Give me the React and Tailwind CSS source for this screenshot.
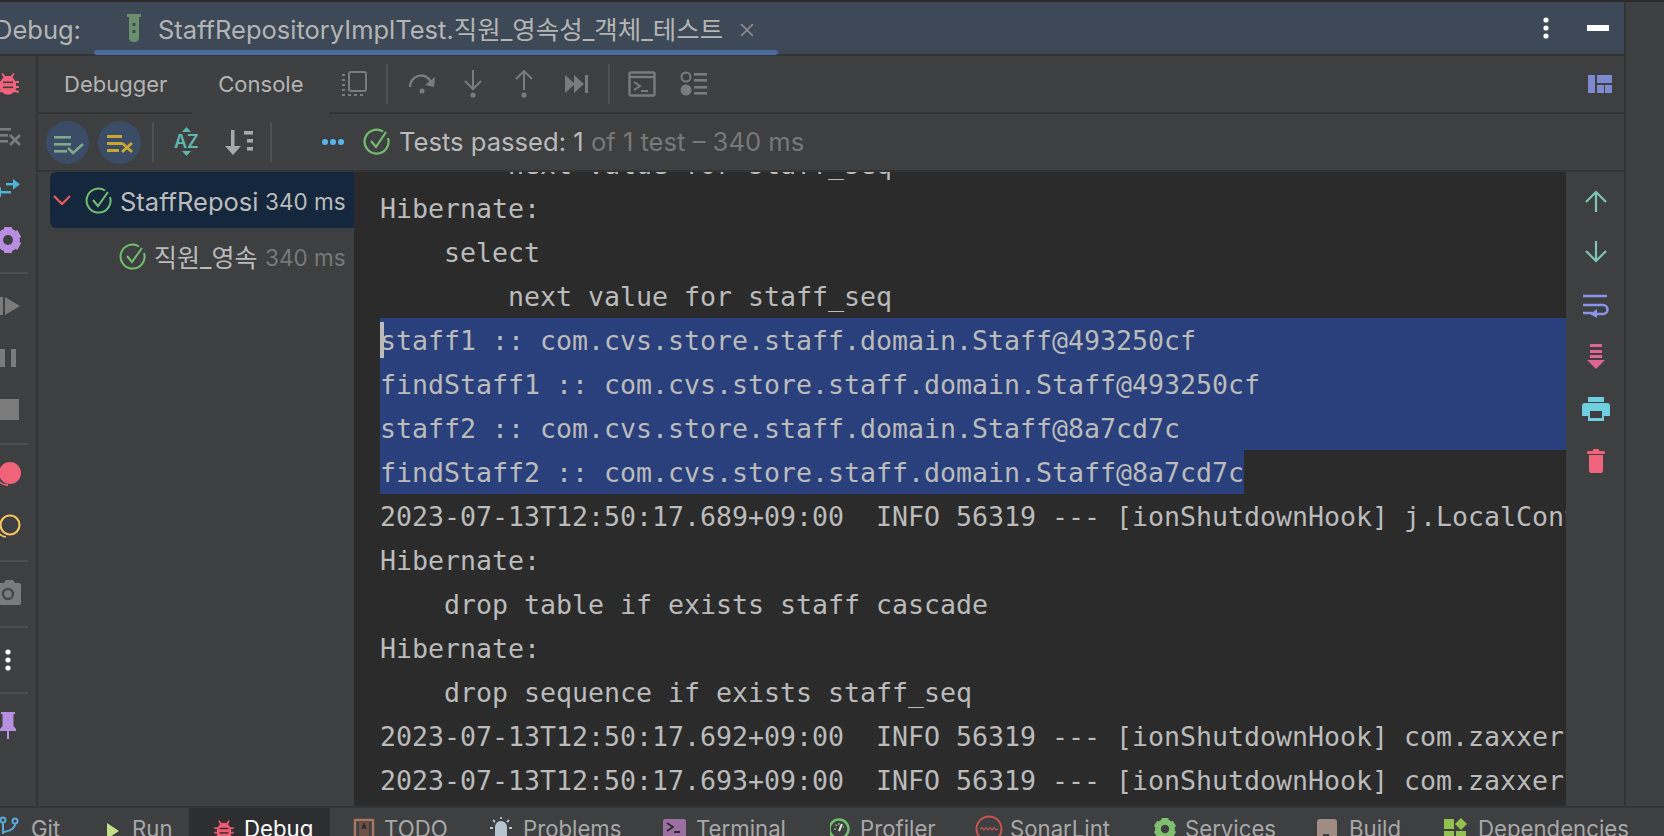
import React from 'react'

const Sep = () => <div className="w-[2px] h-[40px] bg-[#505153] shrink-0" />
const StripeDivider = () => <div className="h-[2px] w-[28px] bg-[#4e4f51]" />

const BugShape = ({ x, y, s = 1, fill = '#f0637a', bg = '#3e3f41' }) => (
  <g transform={`translate(${x} ${y}) scale(${s})`} fill={fill} stroke="none">
    <path d="M-5 -11 L-3 -8 L3 -8 L5 -11 L6.5 -10 L4.5 -6.5 A8 8 0 0 1 7 -3 L11 -3 L11 -1 L8 -1 L8 2 L11 2 L11 4 L8 4 A8 8 0 0 1 7.5 6 L11 7 L10.5 9 L6 8 A8 8 0 0 1 -6 8 L-10.5 9 L-11 7 L-7.5 6 A8 8 0 0 1 -8 4 L-11 4 L-11 2 L-8 2 L-8 -1 L-11 -1 L-11 -3 L-7 -3 A8 8 0 0 1 -4.5 -6.5 L-6.5 -10 Z" />
    <rect x="-5" y="-2.5" width="10" height="1.6" fill={bg} />
    <rect x="-5" y="2.5" width="10" height="1.6" fill={bg} />
  </g>
)

const Gear = ({ cx, cy, r, fill }) => (
  <g>
    <circle cx={cx} cy={cy} r={r * 0.66} fill="none" stroke={fill} strokeWidth={r * 0.5} />
    {[0, 60, 120].map((a) => (
      <rect
        key={a}
        x={cx - r * 0.3}
        y={cy - r}
        width={r * 0.6}
        height={r * 2}
        fill={fill}
        transform={`rotate(${a} ${cx} ${cy})`}
      />
    ))}
    <circle cx={cx} cy={cy} r={r * 0.38} fill="#3e3f41" />
  </g>
)

const Slot = ({ h, children }) => (
  <svg width="36" height={h} className="block shrink-0">
    {children}
  </svg>
)

const LeftStripe = () => (
  <div className="w-[36px] shrink-0 flex flex-col overflow-hidden">
    <Slot h={56}><BugShape x={8} y={28} /></Slot>
    <Slot h={52}>
      <g fill="#7b7b7b">
        <rect x="0" y="16" width="11" height="2.6" />
        <rect x="0" y="22" width="8" height="2.6" />
        <rect x="0" y="28" width="8" height="2.6" />
      </g>
      <path d="M10 23 L20 33 M20 23 L10 33" stroke="#7b7b7b" strokeWidth="2.8" />
    </Slot>
    <Slot h={48}>
      <g fill="#4cb6d8">
        <rect x="6" y="19" width="10" height="2.4" />
        <path d="M13 15 L20 20.2 L13 25.4 Z" />
        <rect x="0" y="27" width="11" height="2.4" />
        <path d="M1 23 L-5 28.2 L1 33.4 Z" />
      </g>
    </Slot>
    <Slot h={60}><Gear cx={8} cy={28} r={13} fill="#b88fe0" /></Slot>
    <StripeDivider />
    <Slot h={58}>
      <g fill="#7b7b7b">
        <rect x="0" y="23" width="3" height="18" />
        <path d="M5 23 L20 32 L5 41 Z" />
      </g>
    </Slot>
    <Slot h={52}>
      <g fill="#7b7b7b">
        <rect x="0" y="17" width="5" height="18" />
        <rect x="11" y="17" width="5" height="18" />
      </g>
    </Slot>
    <Slot h={59}><rect x="0" y="15" width="19" height="21" fill="#7b7b7b" /></Slot>
    <StripeDivider />
    <Slot h={54}>
      <path d="M-2 34 A11 11 0 0 0 8 39 L8 41 A12 12 0 0 1 -2 36 Z" fill="#f0637a" />
      <circle cx="10" cy="28" r="11" fill="#f0637a" />
    </Slot>
    <Slot h={61}>
      <path d="M-2 33 A11 11 0 0 0 6 38" stroke="#f5c261" strokeWidth="1.6" fill="none" />
      <circle cx="10" cy="26" r="9.5" fill="none" stroke="#f5c261" strokeWidth="2.2" />
    </Slot>
    <StripeDivider />
    <Slot h={64}>
      <path d="M-3 21 L4 21 L6 18 L13 18 L15 21 L19 21 Q21 21 21 23 L21 41 Q21 43 19 43 L-3 43 Z" fill="#7b7b7b" />
      <circle cx="8" cy="32" r="5" fill="none" stroke="#46474a" strokeWidth="2.4" />
    </Slot>
    <StripeDivider />
    <Slot h={64}>
      <g fill="#ffffff">
        <circle cx="8" cy="24" r="2.6" />
        <circle cx="8" cy="32" r="2.6" />
        <circle cx="8" cy="40" r="2.6" />
      </g>
    </Slot>
    <StripeDivider />
    <Slot h={56}>
      <path d="M1 18 L15 18 L15 20 L13.5 20 L13.5 32 L16 35 L16 37 L9 37 L9 45 L7 45 L7 37 L0 37 L0 35 L2.5 32 L2.5 20 L1 20 Z" fill="#b88fe0" />
    </Slot>
  </div>
)

const ToolbarTop = () => (
  <div className="h-[56px] flex items-center relative text-[#b4b4b4]">
    <span className="ml-[26px] text-[22px] leading-none">Debugger</span>
    <span className="ml-[51px] text-[22px] leading-none">Console</span>
    <svg width="26" height="26" className="ml-[37px] shrink-0" fill="none" stroke="#7b7b7b" strokeWidth="2">
      <rect x="8" y="1" width="17" height="19" rx="2" />
      <path d="M1 4 h4 M1 9 h4 M1 14 h4 M1 19 h4 M1 24 h3 M7 24 h3 M13 24 h3 M19 24 h3" strokeDasharray="3 2" />
    </svg>
    <div className="ml-[19px]"><Sep /></div>
    <svg width="30" height="24" className="ml-[20px] shrink-0" fill="none" stroke="#7b7b7b" strokeWidth="2.4">
      <path d="M2 15 A11 11 0 0 1 23 10" />
      <path d="M27 5 L26 15 L17 13 Z" fill="#7b7b7b" stroke="none" />
      <circle cx="14" cy="19" r="2.5" fill="#7b7b7b" stroke="none" />
    </svg>
    <svg width="20" height="28" className="ml-[25px] shrink-0" fill="none" stroke="#7b7b7b" strokeWidth="2">
      <path d="M10 0 V19 M2 11 L10 19 L18 11" />
      <circle cx="10" cy="25" r="2.6" fill="#7b7b7b" stroke="none" />
    </svg>
    <svg width="20" height="28" className="ml-[31px] shrink-0" fill="none" stroke="#7b7b7b" strokeWidth="2">
      <path d="M10 20 V1 M2 9 L10 1 L18 9" />
      <circle cx="10" cy="25" r="2.6" fill="#7b7b7b" stroke="none" />
    </svg>
    <svg width="24" height="20" className="ml-[31px] shrink-0" fill="#7b7b7b">
      <path d="M0 1 L10 10 L0 19 Z M9 1 L19 10 L9 19 Z" />
      <rect x="20" y="1" width="3" height="18" />
    </svg>
    <div className="ml-[19px]"><Sep /></div>
    <svg width="28" height="26" className="ml-[18px] shrink-0" fill="none" stroke="#7b7b7b" strokeWidth="2.4">
      <rect x="1.5" y="1.5" width="25" height="23" rx="1.5" />
      <path d="M1 6 H27" />
      <path d="M6 11 L12 15 L6 19 M13 20 H20" strokeWidth="2" />
    </svg>
    <svg width="28" height="26" className="ml-[24px] shrink-0" fill="#7b7b7b">
      <circle cx="6" cy="6" r="4.5" fill="none" stroke="#7b7b7b" strokeWidth="2" />
      <circle cx="6" cy="19" r="5.5" />
      <rect x="14" y="2" width="13" height="2.6" />
      <rect x="14" y="8" width="13" height="2.6" />
      <rect x="14" y="15" width="13" height="2.6" />
      <rect x="14" y="21" width="13" height="2.6" />
    </svg>
    <svg width="24" height="18" className="ml-auto mr-[12px] shrink-0" fill="#7d89d0">
      <rect x="0" y="0" width="7" height="18" />
      <rect x="9" y="0" width="15" height="8" />
      <rect x="9" y="10" width="7" height="8" />
      <rect x="17" y="10" width="7" height="8" />
    </svg>
  </div>
)

const ToolbarBottom = () => (
  <div className="h-[56px] flex items-center">
    <svg width="43" height="43" className="ml-[8px] shrink-0">
      <circle cx="21.5" cy="21.5" r="21.5" fill="#3b4d66" />
      <g fill="#7ea98a">
        <rect x="8" y="15" width="17" height="2.6" />
        <rect x="8" y="22" width="17" height="2.6" />
        <rect x="8" y="29" width="13" height="2.6" />
      </g>
      <path d="M22 27 L27 32 L37 23" fill="none" stroke="#7ea98a" strokeWidth="2.6" />
    </svg>
    <svg width="43" height="43" className="ml-[9px] shrink-0">
      <circle cx="21.5" cy="21.5" r="21.5" fill="#3b4d66" />
      <g fill="#c9a632">
        <rect x="9" y="14" width="15" height="3" />
        <rect x="9" y="21" width="15" height="3" />
        <rect x="9" y="28" width="12" height="3" />
      </g>
      <path d="M24 22 L34 31 M34 22 L24 31" fill="none" stroke="#c9a632" strokeWidth="3" />
    </svg>
    <div className="ml-[11px]"><Sep /></div>
    <svg width="26" height="32" className="ml-[20px] shrink-0">
      <path d="M12.5 1 L17 6 L8 6 Z M12.5 30 L17 25 L8 25 Z" fill="#5fb7ad" />
      <text x="0" y="22" fontSize="18" fontWeight="600" fill="#5fb7ad" className="[font-family:Inter,sans-serif]">AZ</text>
    </svg>
    <svg width="28" height="25" className="ml-[25px] shrink-0" fill="#a8a8a8">
      <path d="M6 0 H9.5 V16 H16 L8 25 L0 16 H6 Z" />
      <rect x="19" y="1" width="9" height="3.6" />
      <rect x="22" y="9" width="6" height="3.6" />
      <rect x="22" y="17" width="6" height="3.6" />
    </svg>
    <div className="ml-[17px]"><Sep /></div>
    <svg width="24" height="8" className="ml-[49px] shrink-0" fill="#58b6ec">
      <circle cx="4" cy="4" r="3" />
      <circle cx="12" cy="4" r="3" />
      <circle cx="20" cy="4" r="3" />
    </svg>
    <svg width="28" height="28" className="ml-[18px] shrink-0" fill="none" stroke="#73bd6f" strokeWidth="2.2">
      <path d="M25 10 A12 12 0 1 1 20 3.5" />
      <path d="M8 13 L13 19 L23 4" />
    </svg>
    <span className="ml-[8px] text-[25.6px] leading-none whitespace-nowrap text-[#bbbbbb]">
      Tests passed: 1 <span className="text-[#787878]">of 1 test – 340 ms</span>
    </span>
  </div>
)

const CheckIcon = () => (
  <svg width="27" height="27" className="shrink-0" fill="none" stroke="#73bd6f" strokeWidth="2">
    <path d="M25 10 A12 12 0 1 1 20 3.5" />
    <path d="M8 13 L13 19 L23 5" />
  </svg>
)

const TestTree = () => (
  <div className="w-[316px] shrink-0 leading-none overflow-hidden">
    <div className="ml-[12px] h-[56px] rounded-l-[6px] bg-[#15273d] flex items-center relative whitespace-nowrap">
      <svg width="18" height="10" className="ml-[3px] shrink-0" fill="none" stroke="#e05a5a" strokeWidth="2.4">
        <path d="M1 1 L9 9 L17 1" />
      </svg>
      <div className="ml-[14px]"><CheckIcon /></div>
      <span className="ml-[8px] w-[138px] pt-[4px] overflow-hidden text-[#bbbbbb] text-[25.5px]">StaffReposi</span>
      <span className="ml-[7px] pt-[4px] text-[#bbbbbb] text-[22.5px]">340 ms</span>
    </div>
    <div className="h-[56px] flex items-center pl-[81px] whitespace-nowrap">
      <CheckIcon />
      <span className="ml-[8px] w-[104px] pt-[4px] overflow-hidden text-[#bbbbbb] text-[25px]">직원_영속</span>
      <span className="ml-[7px] pt-[4px] text-[#787878] text-[22.5px]">340 ms</span>
    </div>
  </div>
)

const lines = [
  { text: '        next value for staff_seq' },
  { text: 'Hibernate:' },
  { text: '    select' },
  { text: '        next value for staff_seq' },
  { text: 'staff1 :: com.cvs.store.staff.domain.Staff@493250cf', selected: true, cursor: true },
  { text: 'findStaff1 :: com.cvs.store.staff.domain.Staff@493250cf', selected: true },
  { text: 'staff2 :: com.cvs.store.staff.domain.Staff@8a7cd7c', selected: true },
  { text: 'findStaff2 :: com.cvs.store.staff.domain.Staff@8a7cd7c', selected: true, fit: true },
  { text: '2023-07-13T12:50:17.689+09:00  INFO 56319 --- [ionShutdownHook] j.LocalContainerEntityManagerFactoryBean' },
  { text: 'Hibernate:' },
  { text: '    drop table if exists staff cascade' },
  { text: 'Hibernate:' },
  { text: '    drop sequence if exists staff_seq' },
  { text: '2023-07-13T12:50:17.692+09:00  INFO 56319 --- [ionShutdownHook] com.zaxxer.hikari.HikariDataSource' },
  { text: '2023-07-13T12:50:17.693+09:00  INFO 56319 --- [ionShutdownHook] com.zaxxer.hikari.HikariDataSource' },
]

const ConsoleOutput = () => (
  <div className="w-[1212px] shrink-0 bg-[#2b2b2b] overflow-hidden pl-[26px] text-[#bbbbbb] text-[26.58px] leading-[44px] whitespace-pre [font-family:'DejaVu_Sans_Mono',monospace]">
    <div className="-mt-[30px]">
      {lines.map((line, i) => (
        <div
          key={i}
          className={`h-[44px] pt-[1px] relative ${line.selected ? 'bg-[#29407c]' : ''} ${line.fit ? 'w-fit' : ''}`}
        >
          {line.cursor && <div className="absolute left-0 top-[4px] w-[4px] h-[36px] bg-[#bbbbbb]" />}
          {line.text}
        </div>
      ))}
    </div>
  </div>
)

const RightToolbar = () => (
  <div className="flex-1 flex flex-col items-center ml-[2px]">
    <svg width="22" height="22" className="mt-[18px] shrink-0" fill="none" stroke="#7fc4b8" strokeWidth="2.2">
      <path d="M11 22 V2 M1 12 L11 2 L21 12" />
    </svg>
    <svg width="22" height="22" className="mt-[29px] shrink-0" fill="none" stroke="#7fc4b8" strokeWidth="2.2">
      <path d="M11 0 V20 M1 10 L11 20 L21 10" />
    </svg>
    <svg width="26" height="24" className="mt-[31px] shrink-0" fill="none" stroke="#8a94e8" strokeWidth="2.6">
      <path d="M0 2 H24 M0 11 H20 A4.5 4.5 0 0 1 20 20 H14 M0 19 H9" />
      <path d="M14 15 L14 24 L7 20 Z" fill="#8a94e8" stroke="none" />
    </svg>
    <svg width="20" height="26" className="mt-[26px] shrink-0" fill="#e0648f">
      <rect x="4" y="0" width="12" height="3" />
      <rect x="4" y="6" width="12" height="3" />
      <rect x="4" y="11" width="12" height="3" />
      <path d="M1 16 H19 L10 25 Z" />
    </svg>
    <svg width="28" height="24" className="mt-[27px] shrink-0" fill="#6fcfe0">
      <rect x="6" y="0" width="16" height="5" />
      <path d="M3 6 H25 Q28 6 28 9 V19 H22 V24 H6 V19 H0 V9 Q0 6 3 6 Z" />
      <rect x="8" y="14" width="12" height="7" fill="#3e3f41" />
    </svg>
    <svg width="18" height="24" className="mt-[28px] shrink-0" fill="#f0637a">
      <rect x="0" y="2" width="18" height="3" rx="1" />
      <rect x="6" y="0" width="6" height="3" rx="1" />
      <path d="M2 6 H16 V22 Q16 24 14 24 H4 Q2 24 2 22 Z" />
    </svg>
  </div>
)

const tabs = [
  {
    label: 'Git',
    offset: 31,
    cls: 'w-[106px]',
    icon: (
      <g fill="none" stroke="#58a8d8" strokeWidth="2">
        <circle cx="3" cy="12" r="2.5" />
        <circle cx="15" cy="13" r="2.5" />
        <path d="M3 15 V26 M15 16 Q15 22 4 24" />
      </g>
    ),
  },
  { label: 'Run', offset: 26, cls: 'w-[83px]', icon: <path d="M1 15 L13 23 L1 31 Z" fill="#c2e08a" /> },
  {
    label: 'Debug',
    offset: 30,
    cls: 'w-[141px] pl-[25px] bg-[#2d2e30] text-white',
    icon: <BugShape x={10} y={22} s={0.88} fill="#ee5a70" bg="#2d2e30" />,
  },
  {
    label: 'TODO',
    offset: 31,
    cls: 'w-[160px] pl-[23px]',
    icon: (
      <g>
        <rect x="2" y="12" width="18" height="24" fill="none" stroke="#a8755f" strokeWidth="2.5" />
        <path d="M6 14 H16 V32 H6 Z" fill="#6b5048" />
        <path d="M11 15 L13 21 L9 18 H13 L9 21 Z" fill="#2b2b2b" stroke="#2b2b2b" strokeWidth="0.8" />
      </g>
    ),
  },
  {
    label: 'Problems',
    offset: 33,
    cls: 'w-[173px]',
    icon: (
      <g>
        <path d="M5 30 V19 A6 6 0 0 1 17 19 V30 Z" fill="#b3c4d0" />
        <path d="M11 9 V11 M3 12 L5 14 M19 12 L17 14 M0 20 H3 M19 20 H22" stroke="#b3c4d0" strokeWidth="1.8" />
      </g>
    ),
  },
  {
    label: 'Terminal',
    offset: 33,
    cls: 'w-[167px]',
    icon: (
      <g>
        <rect x="0" y="11" width="23" height="25" rx="2" fill="#9b6fa0" />
        <path d="M4 15 L10 19 L4 23 M11 24 H17" fill="none" stroke="#2b2b2b" strokeWidth="1.8" />
      </g>
    ),
  },
  {
    label: 'Profiler',
    offset: 30,
    cls: 'w-[145px]',
    icon: (
      <g fill="none" stroke="#73bd6f">
        <circle cx="9" cy="21" r="9.5" strokeWidth="2.5" />
        <path d="M9 23 L12 16" strokeWidth="2" stroke="#d5e6d2" />
        <path d="M4 21 h2 M5.5 16.5 l1.5 1.5 M9 15 v2 M13 19 h1" strokeWidth="1.5" />
      </g>
    ),
  },
  {
    label: 'SonarLint',
    offset: 35,
    cls: 'w-[178px]',
    icon: (
      <g fill="none" stroke="#c4554f" strokeWidth="2">
        <circle cx="14" cy="21" r="12.5" />
        <path d="M5 21 L7 19.5 L9 22 L11 19.5 L13 22 L15 19.5 L17 22 L19 19.5 L21 22 L23 21" strokeWidth="1.2" />
      </g>
    ),
  },
  { label: 'Services', offset: 32, cls: 'w-[164px]', icon: <Gear cx={12} cy={21} r={11} fill="#7fbf6e" /> },
  {
    label: 'Build',
    offset: 32,
    cls: 'w-[127px]',
    icon: (
      <g>
        <path d="M3 11 H17 Q20 11 20 14 V36 H0 V14 Q0 11 3 11 Z" fill="#a08c82" />
        <rect x="6" y="26" width="6" height="4" fill="#3e3f41" />
      </g>
    ),
  },
  {
    label: 'Dependencies',
    offset: 34,
    cls: 'w-[180px]',
    icon: (
      <g fill="#93c04e">
        <rect x="0" y="11" width="10" height="10" />
        <path d="M17 10 L23 16 L17 22 L11 16 Z" />
        <rect x="0" y="23" width="10" height="10" />
        <rect x="12" y="23" width="10" height="10" />
      </g>
    ),
  },
]

const ToolWindowBar = () => (
  <div className="h-[28px] flex overflow-hidden text-[22.2px] text-[#a8a8a8] whitespace-nowrap bg-[#3e3f41]">
    {tabs.map((tab) => (
      <div key={tab.label} className={`h-[28px] flex shrink-0 ${tab.cls}`}>
        <svg width={tab.offset} height="28" className="shrink-0 overflow-hidden">
          {tab.icon}
        </svg>
        <span className="leading-[28px] pt-[7px]">{tab.label}</span>
      </div>
    ))}
  </div>
)

const App = () => {
  return (
    <div className="w-[1664px] h-[836px] overflow-hidden flex flex-col bg-[#3e3f41] [font-family:Inter,'Noto_Sans_CJK_KR',sans-serif]">
      <div className="h-[2px] bg-[#2b2b2b] shrink-0" />
      <div className="h-[804px] flex shrink-0">
        <div className="w-[1624px] shrink-0 flex flex-col">
          <div className="h-[52px] shrink-0 bg-[#3d4956] flex items-center relative whitespace-nowrap">
            <span className="-ml-[6px] w-[133px] pt-[3px] shrink-0 text-[25.5px] leading-none text-[#b4b4b4]">Debug:</span>
            <svg width="14" height="28" className="shrink-0" fill="#6a8f6e">
              <rect x="0" y="0" width="14" height="3" />
              <path d="M2 3 H12 V24 Q12 28 7 28 Q2 28 2 24 Z" />
              <rect x="5.5" y="9" width="3" height="3" fill="#3d4956" />
              <rect x="5.5" y="16" width="3" height="3" fill="#3d4956" />
            </svg>
            <span className="ml-[17px] pt-[3px] text-[25.5px] leading-none text-[#b4b4b4]">StaffRepositoryImplTest.직원_영속성_객체_테스트</span>
            <svg width="14" height="12" className="ml-[17px] mt-[4px] shrink-0" fill="none" stroke="#8f8f8f" strokeWidth="1.6">
              <path d="M1 0 L13 12 M13 0 L1 12" />
            </svg>
            <div className="absolute left-[94px] bottom-[-1px] w-[684px] h-[5px] rounded-full bg-[#4a6a9b]" />
            <svg width="6" height="22" className="ml-auto mr-[75px] shrink-0" fill="#ffffff">
              <circle cx="3" cy="3" r="2.6" />
              <circle cx="3" cy="11" r="2.6" />
              <circle cx="3" cy="19" r="2.6" />
            </svg>
            <div className="absolute left-[1587px] top-[23px] w-[22px] h-[6px] bg-white" />
          </div>
          <div className="h-[2px] shrink-0 bg-[#333436]" />
          <div className="flex-1 flex min-h-0">
            <LeftStripe />
            <div className="w-[2px] shrink-0 bg-[#333436]" />
            <div className="flex-1 flex flex-col min-w-0">
              <ToolbarTop />
              <div className="h-[2px] shrink-0 bg-[#333436] flex">
                <div className="ml-[154px] w-[137px] bg-[#3e3f41]" />
              </div>
              <ToolbarBottom />
              <div className="h-[2px] shrink-0 bg-[#333436]" />
              <div className="flex-1 flex min-h-0">
                <TestTree />
                <ConsoleOutput />
                <RightToolbar />
              </div>
            </div>
          </div>
        </div>
        <div className="w-[2px] shrink-0 bg-[#333436]" />
      </div>
      <div className="h-[2px] shrink-0 bg-[#333436]" />
      <ToolWindowBar />
    </div>
  )
}

export default App
